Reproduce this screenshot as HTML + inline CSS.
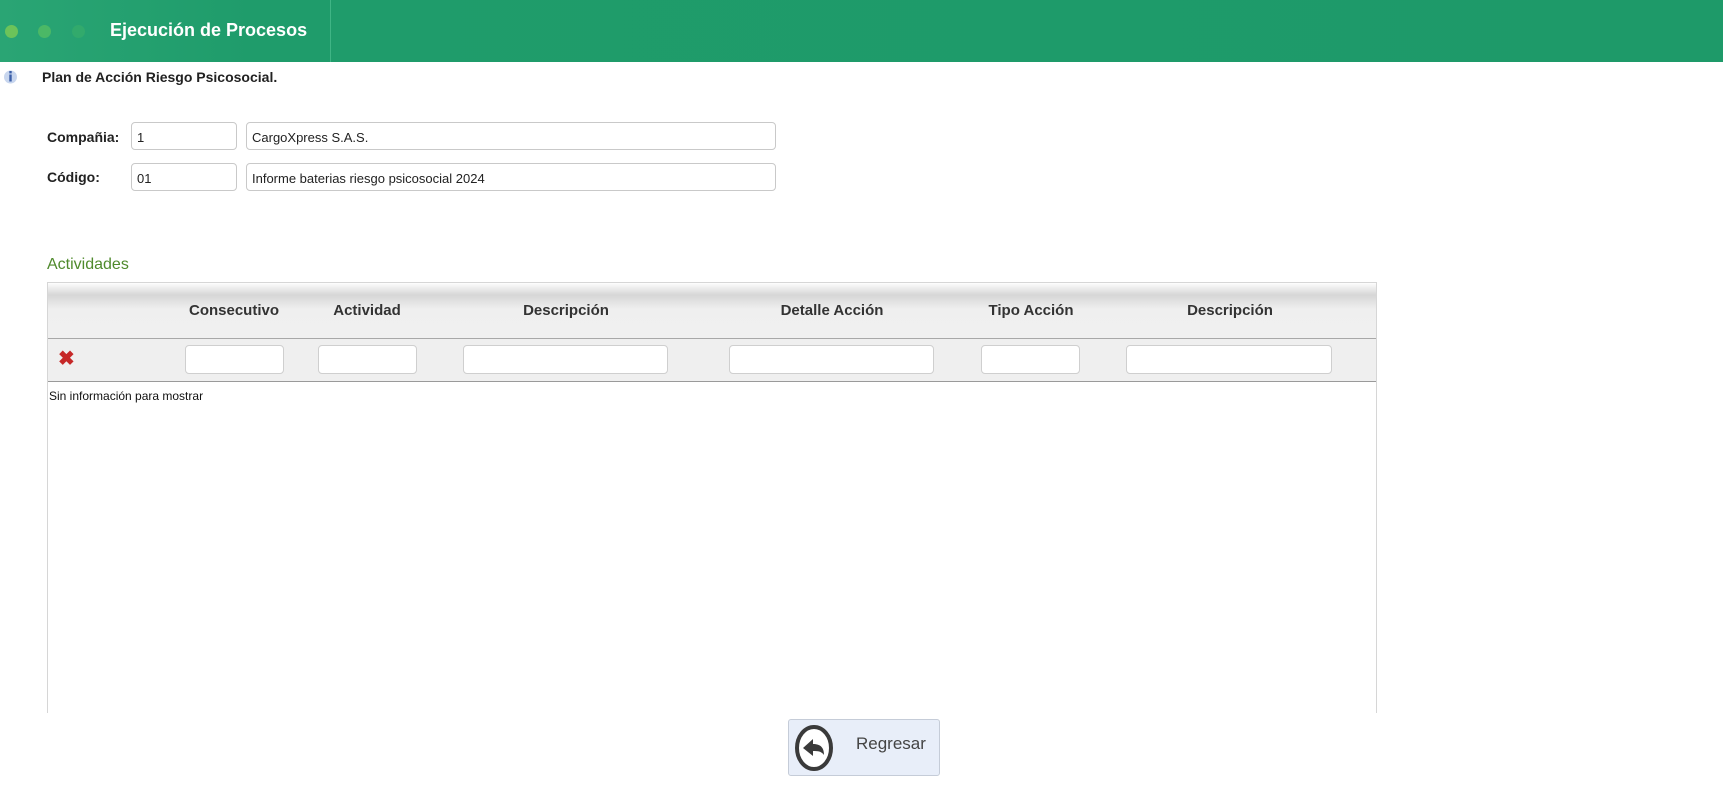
<!DOCTYPE html>
<html><head><meta charset="utf-8"><style>
*{box-sizing:border-box;margin:0;padding:0}
body{width:1723px;height:799px;background:#fff;font-family:"Liberation Sans",sans-serif;position:relative;overflow:hidden;color:#222}
.abs{position:absolute}
.hdr{left:0;top:0;width:1723px;height:62px;background:linear-gradient(90deg,#2aa574 0,#1f9c6b 250px,#1e9a69 100%)}
.dot{width:13px;height:13px;border-radius:50%;top:25px}
.inp{border:1px solid #c9c9c9;border-radius:4px;background:#fff;font-size:13px;padding:7px 0 0 5px;color:#222}
.lbl{font-weight:bold;font-size:14px;color:#222}
.th{font-weight:bold;font-size:15px;color:#333;top:302px;transform:translateX(-50%);white-space:nowrap}
.fi{top:345px;height:29px;border:1px solid #cfcfcf;border-radius:4px;background:#fff}
</style></head><body>
<div class="abs hdr"></div>
<div class="abs dot" style="left:5px;background:#6cc35a"></div>
<div class="abs dot" style="left:38px;background:#4bb866"></div>
<div class="abs dot" style="left:72px;background:#32aa6c"></div>
<div class="abs" style="left:110px;top:20px;color:#fff;font-weight:bold;font-size:18px">Ejecución de Procesos</div>
<div class="abs" style="left:330px;top:0;width:1px;height:62px;background:#3fb585"></div>
<svg class="abs" style="left:3px;top:69px" width="15" height="16" viewBox="0 0 15 16"><circle cx="7.5" cy="8" r="6.5" fill="#c8d6ee"/><rect x="6.3" y="2" width="2.4" height="2.4" fill="#3b5fa8"/><rect x="6.3" y="5.5" width="2.4" height="7" fill="#3b5fa8"/></svg>
<div class="abs lbl" style="left:42px;top:69px;font-size:14px">Plan de Acción Riesgo Psicosocial.</div>

<div class="abs lbl" style="left:47px;top:129px">Compañia:</div>
<div class="abs inp" style="left:131px;top:122px;width:106px;height:28px">1</div>
<div class="abs inp" style="left:246px;top:122px;width:530px;height:28px">CargoXpress S.A.S.</div>
<div class="abs lbl" style="left:47px;top:169px">Código:</div>
<div class="abs inp" style="left:131px;top:163px;width:106px;height:28px">01</div>
<div class="abs inp" style="left:246px;top:163px;width:530px;height:28px">Informe baterias riesgo psicosocial 2024</div>

<div class="abs" style="left:47px;top:256px;color:#4f8a2c;font-size:16px">Actividades</div>
<div class="abs" style="left:47px;top:282px;width:1330px;height:431px;border:1px solid #d6d6d6;border-bottom:none"></div>
<div class="abs" style="left:48px;top:283px;width:1328px;height:56px;background:linear-gradient(#fdfdfd 0,#d6d6d6 12px,#efefef 26px,#f0f0f0 100%);border-bottom:1px solid #a8a8a8"></div>
<div class="abs" style="left:48px;top:339px;width:1328px;height:43px;background:#efefef;border-bottom:1px solid #9a9a9a"></div>
<div class="abs th" style="left:234px">Consecutivo</div>
<div class="abs th" style="left:367px">Actividad</div>
<div class="abs th" style="left:566px">Descripción</div>
<div class="abs th" style="left:832px">Detalle Acción</div>
<div class="abs th" style="left:1031px">Tipo Acción</div>
<div class="abs th" style="left:1230px">Descripción</div>
<div class="abs" style="left:58px;top:346px;color:#c62828;font-size:20px;font-weight:bold">✖</div>
<div class="abs fi" style="left:185px;width:99px"></div>
<div class="abs fi" style="left:318px;width:99px"></div>
<div class="abs fi" style="left:463px;width:205px"></div>
<div class="abs fi" style="left:729px;width:205px"></div>
<div class="abs fi" style="left:981px;width:99px"></div>
<div class="abs fi" style="left:1126px;width:206px"></div>
<div class="abs" style="left:49px;top:389px;font-size:12px;color:#111">Sin información para mostrar</div>

<div class="abs" style="left:788px;top:719px;width:152px;height:57px;background:#e8eef9;border:1px solid #c5ccd8;border-radius:3px"></div>
<svg class="abs" style="left:794px;top:724px" width="40" height="48" viewBox="0 0 40 48"><ellipse cx="20" cy="24" rx="17" ry="21" fill="#fff" stroke="#3a3a3a" stroke-width="4"/><path d="M9 24 L19 15 L19 20 C26 20 30 23 30 31 C27 27 24 27 19 27 L19 32 Z" fill="#3a3a3a"/></svg>
<div class="abs" style="left:856px;top:734px;font-size:17px;color:#444">Regresar</div>
</body></html>
